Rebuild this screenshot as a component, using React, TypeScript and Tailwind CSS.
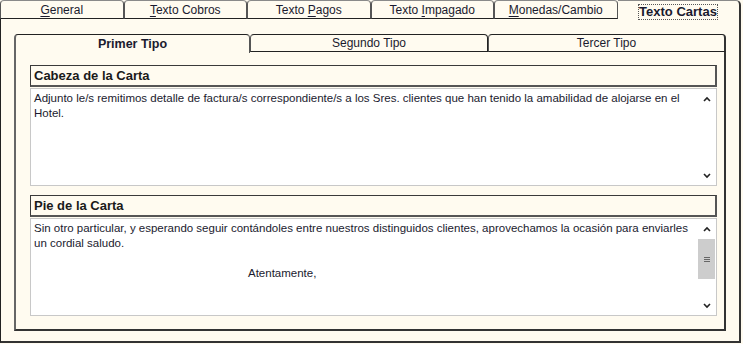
import React from "react";

const outerTabs = [
  { label: "General", key: "G", idx: 0 },
  { label: "Texto Cobros", key: "T", idx: 0 },
  { label: "Texto Pagos", key: "P", idx: 6 },
  { label: "Texto Impagado", key: "I", idx: 6 },
  { label: "Monedas/Cambio", key: "M", idx: 0 },
];

const Accel = ({ text, idx }: { text: string; idx: number }) => (
  <span>
    {text.slice(0, idx)}
    <span className="underline underline-offset-2">{text[idx]}</span>
    {text.slice(idx + 1)}
  </span>
);

const ScrollBar = ({ thumb }: { thumb?: boolean }) => (
  <div className="w-[17px] h-full flex flex-col items-center bg-white">
    <div className="h-[17px] w-full flex items-center justify-center">
      <svg width="8" height="6" viewBox="0 0 8 6">
        <path d="M1 5 L4 2 L7 5" stroke="#222" strokeWidth="1.6" fill="none" />
      </svg>
    </div>
    <div className="flex-1 w-full">
      {thumb && (
        <div className="mt-[2px] h-[40px] w-full bg-[#cdcdcd] flex items-center justify-center">
          <svg width="8" height="7" viewBox="0 0 8 7">
            <path d="M1 1.5 H7 M1 3.5 H7 M1 5.5 H7" stroke="#666" strokeWidth="1" />
          </svg>
        </div>
      )}
    </div>
    <div className="h-[17px] w-full flex items-center justify-center">
      <svg width="8" height="6" viewBox="0 0 8 6">
        <path d="M1 1 L4 4 L7 1" stroke="#222" strokeWidth="1.6" fill="none" />
      </svg>
    </div>
  </div>
);

const Section = ({
  title,
  children,
  thumb,
}: {
  title: string;
  children: React.ReactNode;
  thumb?: boolean;
}) => (
  <div className="flex flex-col">
    <div className="h-[22px] border border-[#3a3a3a] border-r-2 border-b-2 border-r-[#555] border-b-[#555] px-[3px] flex items-center font-bold text-[13px] text-[#1a1a1a]">
      {title}
    </div>
    <div className="mt-[1px] h-[98px] bg-white border border-[#c8c8c8] flex">
      <div className="flex-1 px-[3px] pt-[2px] text-[11.5px] leading-[15px] text-[#1a1a2e]">
        {children}
      </div>
      <div className="py-[1px] pr-[1px]">
        <ScrollBar thumb={thumb} />
      </div>
    </div>
  </div>
);

export default function App() {
  return (
    <div className="w-[743px] h-[344px] bg-[#fffbf0] font-['Liberation_Sans',Arial,sans-serif] text-[12px] text-[#1a1a2e] flex flex-col overflow-hidden">
      {/* Outer tabs */}
      <div className="h-[18px] flex relative z-10">
        {outerTabs.map((t) => (
          <div
            key={t.label}
            className="w-[123.5px] h-[19px] border border-[#555] border-t-[#8a8a8a] border-b-[#222] rounded-t-[4px] flex items-center justify-center pt-[1px]"
          >
            <Accel text={t.label} idx={t.idx} />
          </div>
        ))}
        <div className="w-[123px] h-[20px] border-t border-[#8a8a8a] border-r-2 border-r-[#333] rounded-tr-[5px] flex items-center justify-center pt-[2px] bg-[#fffbf0]">
          <span className="font-bold text-[13px] outline-1 outline-dotted outline-[#555] leading-[14px]">
            Texto Cartas
          </span>
        </div>
      </div>

      {/* Outer panel */}
      <div className="w-[741px] h-[325px] border border-[#222] border-r-2 border-b-2 border-r-[#333] border-b-[#333] pl-[13px] pt-[15px]">
        <div className="w-[712px] h-[297px] flex flex-col">
          {/* Inner tabs */}
          <div className="h-[18px] flex">
            <div className="w-[236px] h-[19px] border-l-2 border-l-[#666] border-t border-t-[#222] border-r border-r-[#555] rounded-t-[4px] flex items-center justify-center font-bold text-[12.5px] bg-[#fffbf0] relative z-10">
              Primer Tipo
            </div>
            <div className="w-[238px] h-[18px] border border-[#222] border-l-[#555] rounded-t-[4px] flex items-center justify-center">
              Segundo Tipo
            </div>
            <div className="w-[238px] h-[18px] border border-[#222] border-l-[#555] border-r-2 border-r-[#333] rounded-t-[4px] flex items-center justify-center">
              Tercer Tipo
            </div>
          </div>
          {/* Inner panel */}
          <div className="flex-1 border-l-2 border-l-[#666] border-r-2 border-r-[#333] border-b-2 border-b-[#333] pl-[14px] pr-[7px] pt-[13px] flex flex-col gap-[9px]">
            <Section title="Cabeza de la Carta">
              Adjunto le/s remitimos detalle de factura/s correspondiente/s a los Sres. clientes que han tenido la amabilidad de alojarse en el
              Hotel.
            </Section>
            <Section title="Pie de la Carta" thumb>
              <div>
                Sin otro particular, y esperando seguir contándoles entre nuestros distinguidos clientes, aprovechamos la ocasión para enviarles
                un cordial saludo.
              </div>
              <div className="mt-[15px] pl-[214px]">Atentamente,</div>
            </Section>
          </div>
        </div>
      </div>
    </div>
  );
}
